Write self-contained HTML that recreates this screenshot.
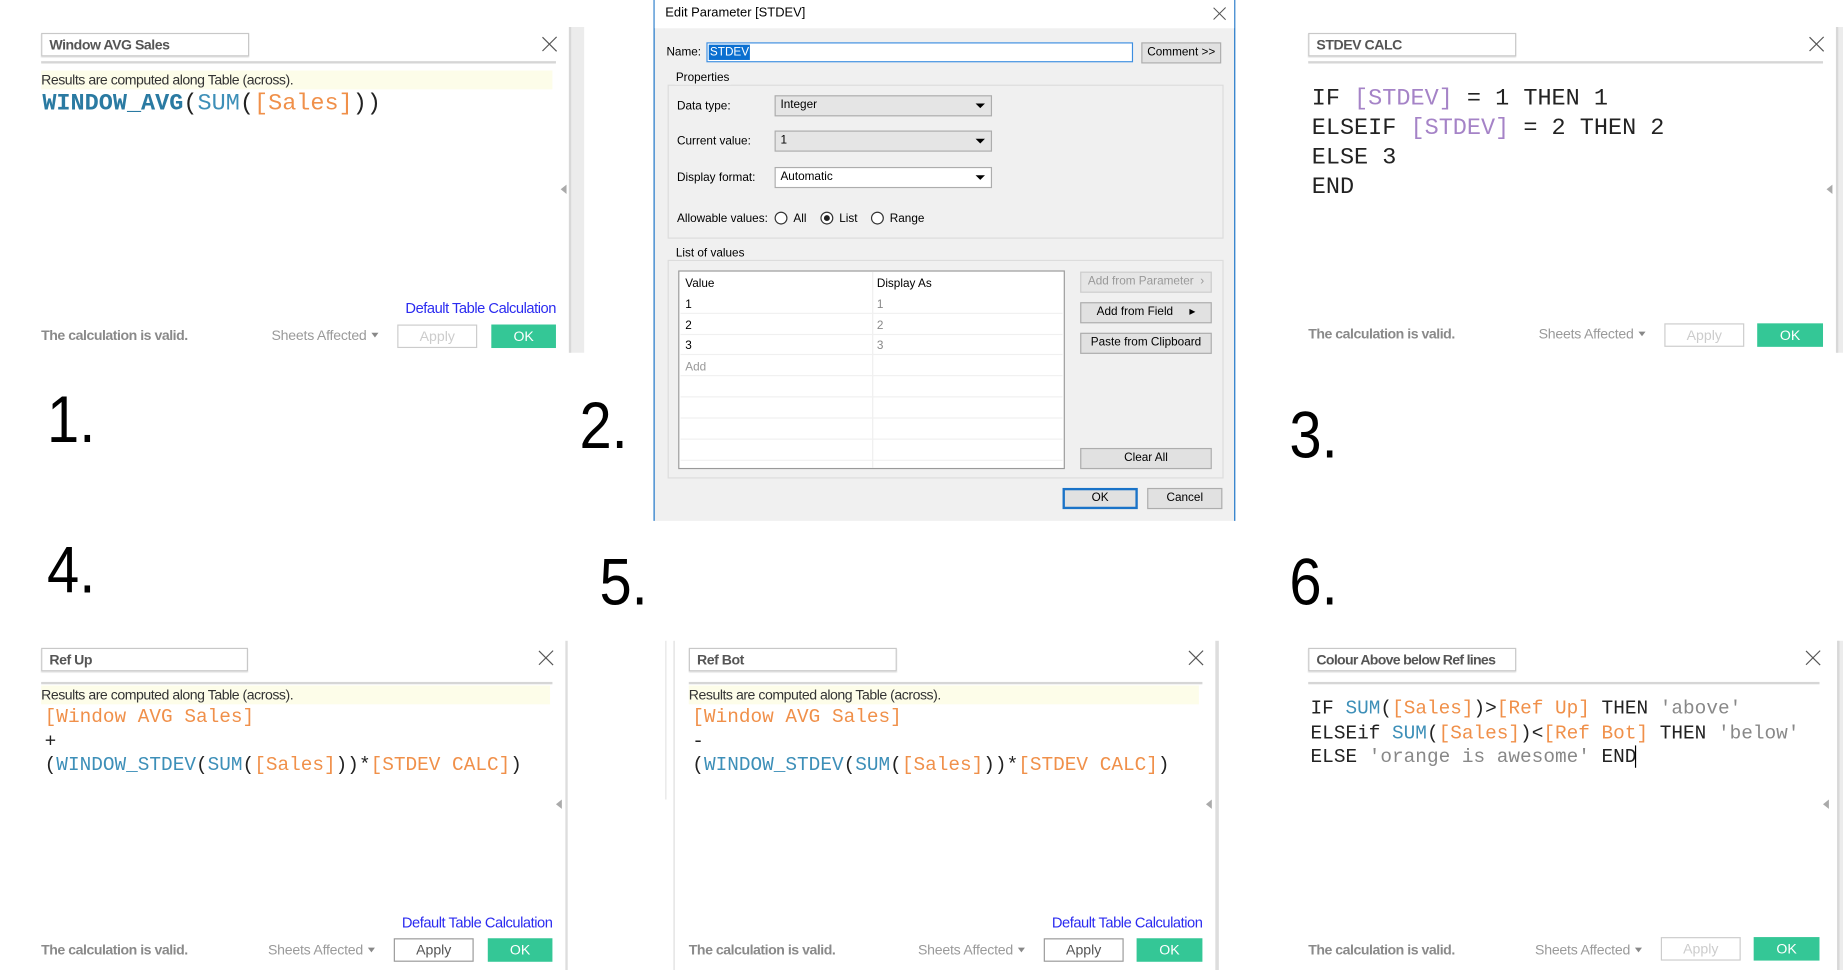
<!DOCTYPE html>
<html><head><meta charset="utf-8"><style>
*{margin:0;padding:0;box-sizing:border-box}
html,body{width:1843px;height:970px;overflow:hidden;background:#fff}
#w{position:absolute;left:0;top:0;width:1568px;height:825px;transform:scale(1.17538,1.17576);transform-origin:0 0;font-family:"Liberation Sans",sans-serif}
.a{position:absolute;white-space:nowrap}
.nb{position:absolute;height:20px;border:1px solid #c8c8c8;box-shadow:0 1px 1px #ddd;font-size:12px;font-weight:bold;color:#555;padding:2px 6px;line-height:14px;white-space:nowrap;overflow:hidden;letter-spacing:-0.4px}
.x{position:absolute;width:14px;height:14px}
.x:before,.x:after{content:"";position:absolute;left:6px;top:-2px;width:1.4px;height:17px;background:#555;transform:rotate(45deg)}
.x:after{transform:rotate(-45deg)}
.sep{position:absolute;height:2px;background:#d6d6d6}
.yel{position:absolute;height:16px;background:#fdfde9;font-size:12px;color:#333;line-height:16px;letter-spacing:-0.4px}
.code{position:absolute;font-family:"Liberation Mono",monospace;white-space:pre}
.kw{color:#222}.fn{color:#3d8fb8}.fd{color:#f0904a}.pa{color:#a583c7}.st{color:#888}
.lnk{position:absolute;font-size:12.5px;color:#2b2bf0;letter-spacing:-0.4px}
.val{position:absolute;font-size:12px;font-weight:bold;color:#8a8a8a;letter-spacing:-0.4px}
.sh{position:absolute;font-size:12px;color:#9a9a9a;letter-spacing:-0.2px}
.sh:after{content:"";display:inline-block;margin-left:4px;border:3.5px solid transparent;border-top:4px solid #888;vertical-align:-1px}
.ap{position:absolute;height:20px;width:68px;border:1px solid #ccc;font-size:12px;text-align:center;line-height:18px;color:#ccc}
.ap.on{border-color:#999;color:#555}
.ok{position:absolute;height:20px;background:#34c796;color:#fff;font-size:12px;text-align:center;line-height:20px}
.big{position:absolute;font-size:56px;line-height:58px;color:#000;transform:scaleX(0.88);transform-origin:0 0}
.strip{position:absolute;background:#ececec;border-left:2px solid #d8d8d8}
.tri{position:absolute;border:4px solid transparent;border-right:5px solid #aaa;border-left:0}
.d{font-family:"Liberation Sans",sans-serif;font-size:10px;color:#000}
.btn{position:absolute;height:18px;background:#e1e1e1;border:1px solid #adadad;font-size:10px;text-align:center;line-height:16px;color:#000}
.cb{position:absolute;height:18px;background:#e5e5e5;border:1px solid #adadad;font-size:10px;line-height:16px;padding-left:4px}
.cb:after{content:"";position:absolute;right:5px;top:6px;border:4px solid transparent;border-top:4px solid #000;border-bottom:0}
.grp{position:absolute;border:1px solid #dcdcdc}
.rad{position:absolute;width:11px;height:11px;border:1px solid #333;border-radius:50%;background:#fff}
.row{position:absolute;left:1px;right:1px;height:1px;background:#f0f0f0}
</style></head><body><div id="w">

<!-- Panel 1 -->
<div class="nb" style="left:35px;top:28px;width:177px">Window AVG Sales</div>
<div class="x" style="left:461px;top:31px"></div>
<div class="sep" style="left:35px;top:52px;width:438px"></div>
<div class="yel" style="left:35px;top:60px;width:435px">Results are computed along Table (across).</div>
<div class="code" style="left:36px;top:78px;font-size:20px;line-height:22px"><b style="color:#2a7aa2">WINDOW_AVG</b><span class="kw">(</span><span class="fn">SUM</span><span class="kw">(</span><span class="fd">[Sales]</span><span class="kw">))</span></div>
<div class="lnk" style="right:1095px;top:255px">Default Table Calculation</div>
<div class="val" style="left:35px;top:278px">The calculation is valid.</div>
<div class="sh" style="left:231px;top:278px">Sheets Affected</div>
<div class="ap" style="left:338px;top:276px">Apply</div>
<div class="ok" style="left:418px;top:276px;width:55px">OK</div>
<div class="strip" style="left:484px;top:23px;width:13px;height:277px"></div>
<div class="tri" style="left:477px;top:157px"></div>

<!-- Panel 2 dialog -->
<div style="position:absolute;left:556px;top:0;width:495px;height:443px;background:#f0f0f0;border-left:1px solid #1a73c8;border-right:1px solid #1a73c8">
 <div style="position:absolute;left:0;top:0;right:0;height:24px;background:#fff"></div>
 <div class="a d" style="left:9px;top:5px;font-size:11px">Edit Parameter [STDEV]</div>
 <div class="x" style="left:474px;top:5px;transform:scale(.85)"></div>
 <div class="a d" style="left:10px;top:39px">Name:</div>
 <div style="position:absolute;left:44px;top:36px;width:363px;height:17px;background:#fff;border:1px solid #3d8ee0"><span class="d" style="position:absolute;left:1px;top:1px;background:#0b6fd0;color:#fff;padding:0 1px;line-height:13px">STDEV</span></div>
 <div class="btn" style="left:414px;top:36px;width:68px">Comment &gt;&gt;</div>
 <div class="grp" style="left:11px;top:72px;width:473px;height:131px"></div>
 <div class="a d" style="left:17px;top:61px;background:#f0f0f0;padding:0 1px">Properties</div>
 <div class="a d" style="left:19px;top:85px">Data type:</div>
 <div class="cb" style="left:102px;top:81px;width:185px">Integer</div>
 <div class="a d" style="left:19px;top:115px">Current value:</div>
 <div class="cb" style="left:102px;top:111px;width:185px">1</div>
 <div class="a d" style="left:19px;top:146px">Display format:</div>
 <div class="cb" style="left:102px;top:142px;width:185px;background:#fff">Automatic</div>
 <div class="a d" style="left:19px;top:181px">Allowable values:</div>
 <div class="rad" style="left:102px;top:180px"></div><div class="a d" style="left:118px;top:181px">All</div>
 <div class="rad" style="left:141px;top:180px"><div style="position:absolute;left:2px;top:2px;width:5px;height:5px;border-radius:50%;background:#222"></div></div><div class="a d" style="left:157px;top:181px">List</div>
 <div class="rad" style="left:184px;top:180px"></div><div class="a d" style="left:200px;top:181px">Range</div>
 <div class="grp" style="left:11px;top:221px;width:473px;height:186px"></div>
 <div class="a d" style="left:17px;top:210px;background:#f0f0f0;padding:0 1px">List of values</div>
 <div style="position:absolute;left:20px;top:230px;width:329px;height:169px;background:#fff;border:1px solid #999">
  <div style="position:absolute;left:164px;top:0;bottom:0;width:1px;background:#eee"></div>
  <div class="a d" style="left:5px;top:5px">Value</div><div class="a d" style="left:168px;top:5px">Display As</div>
  <div class="a d" style="left:5px;top:23px">1</div><div class="a d" style="left:168px;top:23px;color:#888">1</div>
  <div class="a d" style="left:5px;top:41px">2</div><div class="a d" style="left:168px;top:41px;color:#888">2</div>
  <div class="a d" style="left:5px;top:58px">3</div><div class="a d" style="left:168px;top:58px;color:#888">3</div>
  <div class="a d" style="left:5px;top:76px;color:#999">Add</div>
  <div class="row" style="top:35px"></div><div class="row" style="top:53px"></div><div class="row" style="top:70px"></div><div class="row" style="top:88px"></div><div class="row" style="top:106px"></div><div class="row" style="top:124px"></div><div class="row" style="top:142px"></div><div class="row" style="top:160px"></div>
 </div>
 <div class="btn" style="left:362px;top:231px;width:112px;color:#999;border-color:#ccc;background:#e6e6e6">Add from Parameter &nbsp;›</div>
 <div class="btn" style="left:362px;top:257px;width:112px">Add from Field &nbsp;&nbsp;&nbsp;&nbsp;▸</div>
 <div class="btn" style="left:362px;top:283px;width:112px">Paste from Clipboard</div>
 <div class="btn" style="left:362px;top:381px;width:112px">Clear All</div>
 <div class="btn" style="left:347px;top:415px;width:64px;border:2px solid #1a73c8;line-height:14px">OK</div>
 <div class="btn" style="left:419px;top:415px;width:64px">Cancel</div>
</div>

<!-- Panel 3 -->
<div class="nb" style="left:1113px;top:28px;width:177px">STDEV CALC</div>
<div class="x" style="left:1539px;top:31px"></div>
<div class="sep" style="left:1113px;top:52px;width:438px"></div>
<div class="code kw" style="left:1116px;top:72px;font-size:20px;line-height:25px">IF <span class="pa">[STDEV]</span> = 1 THEN 1
ELSEIF <span class="pa">[STDEV]</span> = 2 THEN 2
ELSE 3
END</div>
<div class="val" style="left:1113px;top:277px">The calculation is valid.</div>
<div class="sh" style="left:1309px;top:277px">Sheets Affected</div>
<div class="ap" style="left:1416px;top:275px">Apply</div>
<div class="ok" style="left:1495px;top:275px;width:56px">OK</div>
<div class="strip" style="left:1562px;top:23px;width:6px;height:277px"></div>
<div class="tri" style="left:1554px;top:157px"></div>

<!-- Big numbers -->
<div class="big" style="left:40px;top:328px">1.</div>
<div class="big" style="left:493px;top:333px">2.</div>
<div class="big" style="left:1097px;top:341px">3.</div>
<div class="big" style="left:40px;top:456px">4.</div>
<div class="big" style="left:510px;top:466px">5.</div>
<div class="big" style="left:1097px;top:466px">6.</div>

<!-- Panel 4 -->
<div class="nb" style="left:35px;top:551px;width:176px">Ref Up</div>
<div class="x" style="left:458px;top:553px"></div>
<div class="sep" style="left:35px;top:580px;width:435px"></div>
<div class="yel" style="left:35px;top:583px;width:433px">Results are computed along Table (across).</div>
<div class="code" style="left:38px;top:600px;font-size:16.5px;line-height:20.5px"><span class="fd">[Window AVG Sales]</span>
<span class="kw">+</span>
<span class="kw">(</span><span class="fn">WINDOW_STDEV</span><span class="kw">(</span><span class="fn">SUM</span><span class="kw">(</span><span class="fd">[Sales]</span><span class="kw">))*</span><span class="fd">[STDEV CALC]</span><span class="kw">)</span></div>
<div class="lnk" style="right:1098px;top:778px">Default Table Calculation</div>
<div class="val" style="left:35px;top:801px">The calculation is valid.</div>
<div class="sh" style="left:228px;top:801px">Sheets Affected</div>
<div class="ap on" style="left:335px;top:798px">Apply</div>
<div class="ok" style="left:415px;top:798px;width:55px">OK</div>
<div style="position:absolute;left:481px;top:545px;width:2px;height:280px;background:#ddd"></div>
<div class="tri" style="left:473px;top:680px"></div>

<!-- Panel 5 -->
<div style="position:absolute;left:573px;top:545px;width:1px;height:280px;background:#ddd"></div>
<div style="position:absolute;left:566px;top:545px;width:1px;height:135px;background:#e4e4e4"></div>
<div class="nb" style="left:586px;top:551px;width:177px">Ref Bot</div>
<div class="x" style="left:1011px;top:553px"></div>
<div class="sep" style="left:586px;top:580px;width:437px"></div>
<div class="yel" style="left:586px;top:583px;width:434px">Results are computed along Table (across).</div>
<div class="code" style="left:589px;top:600px;font-size:16.5px;line-height:20.5px"><span class="fd">[Window AVG Sales]</span>
<span class="kw">-</span>
<span class="kw">(</span><span class="fn">WINDOW_STDEV</span><span class="kw">(</span><span class="fn">SUM</span><span class="kw">(</span><span class="fd">[Sales]</span><span class="kw">))*</span><span class="fd">[STDEV CALC]</span><span class="kw">)</span></div>
<div class="lnk" style="right:545px;top:778px">Default Table Calculation</div>
<div class="val" style="left:586px;top:801px">The calculation is valid.</div>
<div class="sh" style="left:781px;top:801px">Sheets Affected</div>
<div class="ap on" style="left:888px;top:798px">Apply</div>
<div class="ok" style="left:967px;top:798px;width:56px">OK</div>
<div style="position:absolute;left:1034px;top:545px;width:3px;height:280px;background:#ddd"></div>
<div class="tri" style="left:1026px;top:680px"></div>

<!-- Panel 6 -->
<div class="nb" style="left:1113px;top:551px;width:177px;letter-spacing:-0.6px">Colour Above below Ref lines</div>
<div class="x" style="left:1536px;top:553px"></div>
<div class="sep" style="left:1113px;top:580px;width:435px"></div>
<div class="code kw" style="left:1115px;top:593px;font-size:16.5px;line-height:20.5px">IF <span class="fn">SUM</span>(<span class="fd">[Sales]</span>)&gt;<span class="fd">[Ref Up]</span> THEN <span class="st">'above'</span>
ELSEif <span class="fn">SUM</span>(<span class="fd">[Sales]</span>)&lt;<span class="fd">[Ref Bot]</span> THEN <span class="st">'below'</span>
ELSE <span class="st">'orange is awesome'</span> END<span style="border-left:1px solid #000;margin-left:-1px"></span></div>
<div class="val" style="left:1113px;top:801px">The calculation is valid.</div>
<div class="sh" style="left:1306px;top:801px">Sheets Affected</div>
<div class="ap" style="left:1413px;top:797px">Apply</div>
<div class="ok" style="left:1492px;top:797px;width:56px">OK</div>
<div class="strip" style="left:1563px;top:545px;width:5px;height:280px"></div>
<div class="tri" style="left:1551px;top:680px"></div>

</div></body></html>
